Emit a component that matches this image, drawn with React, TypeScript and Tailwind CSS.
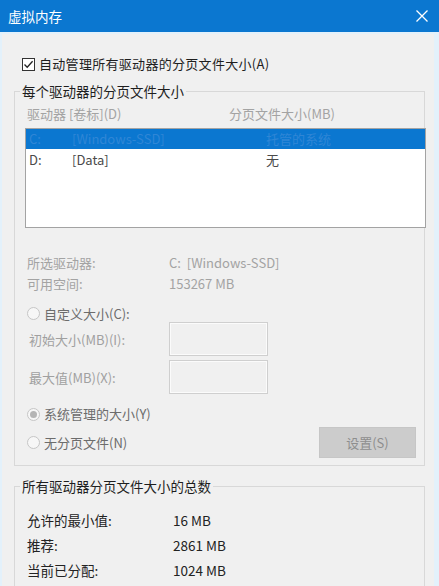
import React from 'react';

const font = { fontFamily: '"Noto Sans CJK SC", "Liberation Sans", sans-serif' };

const Radio: React.FC<{ checked?: boolean; label: string; className?: string }> = ({ checked, label, className }) => (
  <div className={`flex items-center ${className ?? ''}`}>
    <span className="ml-[7px] w-[13px] h-[13px] rounded-full border border-[#c6c6c6] bg-[#f7f7f7] flex items-center justify-center">
      {checked && <span className="w-[7px] h-[7px] rounded-full bg-[#b5b5b5]" />}
    </span>
    <span className="ml-[4px] text-[13px] leading-[18px] text-[#6c6c6c]">{label}</span>
  </div>
);

const InputRow: React.FC<{ label: string; className?: string }> = ({ label, className }) => (
  <div className={`flex items-center h-[34px] ${className ?? ''}`}>
    <span className="ml-[9px] w-[140px] pt-[2px] text-[13px] leading-[18px] text-[#a0a0a0]">{label}</span>
    <div className="w-[99px] h-[34px] border border-[#cfcfcf] bg-[#f0f0f0] shadow-[inset_0_0_0_1px_#fbfbfb]" />
  </div>
);

export default function App() {
  return (
    <div className="w-[439px] h-[586px] overflow-hidden bg-[#e3f1fb]" style={font}>
      {/* Title bar */}
      <div className="h-8 bg-[#0b77d0] flex items-center justify-between pl-2 pr-[10px]">
        <span className="text-[13.5px] leading-[18px] text-white">虚拟内存</span>
        <svg width="12" height="12" viewBox="0 0 12 12" className="mr-[1px]">
          <path d="M0.5 0.5 L11.5 11.5 M11.5 0.5 L0.5 11.5" stroke="#ffffff" strokeWidth="1.3" fill="none" />
        </svg>
      </div>

      <div className="mt-[2px] ml-[2px] mr-[5px] h-[552px] bg-[#f0f0f0] pt-[21px] overflow-hidden">
        {/* Auto manage checkbox */}
        <div className="flex items-center h-[18px] pl-[20px]">
          <span className="w-[13px] h-[13px] border border-[#333333] bg-white flex items-center justify-center">
            <svg width="11" height="11" viewBox="0 0 11 11">
              <path d="M1.5 5.5 L4.2 8.3 L9.6 2.2" stroke="#222222" strokeWidth="1.3" fill="none" />
            </svg>
          </span>
          <span className="ml-[4px] text-[13px] tracking-[0.3px] leading-[18px] text-[#1e1e1e]">自动管理所有驱动器的分页文件大小(A)</span>
        </div>

        {/* Per-drive group */}
        <fieldset className="mt-[9px] ml-[12px] w-[411px] min-w-0 border border-[#d8d8d8] pl-[5px] pr-[8px] pb-[7px]">
          <legend className="px-[2px] text-[13.5px] leading-[18px] text-[#1e1e1e]">每个驱动器的分页文件大小</legend>

          <div className="flex mt-[5px] h-[18px] text-[13px] leading-[18px] text-[#a3a3a3]">
            <span className="ml-[7px] w-[202px]">驱动器 [卷标](D)</span>
            <span>分页文件大小(MB)</span>
          </div>

          <div className="mt-[5px] ml-[5px] w-[401px] h-[100px] border border-[#a3a3a3] bg-white">
            <div className="flex h-[20px] items-center bg-[#0b77d0] text-[13px] leading-[18px] text-[#2f86d6] pl-[3px]">
              <span className="w-[43px]">C:</span>
              <span className="w-[194px]">[Windows-SSD]</span>
              <span>托管的系统</span>
            </div>
            <div className="flex h-[21px] items-center text-[13px] leading-[18px] text-[#4a4a4a] pl-[3px]">
              <span className="w-[43px]">D:</span>
              <span className="w-[194px]">[Data]</span>
              <span>无</span>
            </div>
          </div>

          <div className="mt-[24px] flex items-center h-[21px] text-[13px] leading-[18px] text-[#a3a3a3]">
            <span className="ml-[7px] w-[142px]">所选驱动器:</span>
            <span>C:&nbsp;&nbsp;[Windows-SSD]</span>
          </div>
          <div className="flex items-center h-[21px] text-[13px] leading-[18px] text-[#a3a3a3]">
            <span className="ml-[7px] w-[142px]">可用空间:</span>
            <span>153267 MB</span>
          </div>

          <Radio label="自定义大小(C):" className="mt-[11px] h-[17px]" />
          <InputRow label="初始大小(MB)(I):" />
          <InputRow label="最大值(MB)(X):" className="mt-[4px]" />

          <Radio checked label="系统管理的大小(Y)" className="mt-[11px] h-[18px]" />

          <div className="mt-[4px] h-[31px] flex items-center justify-between">
            <Radio label="无分页文件(N)" />
            <div className="w-[97px] h-[31px] bg-[#cccccc] border border-[#c6c6c6] flex items-center justify-center text-[13px] leading-[18px] text-[#8e8e8e]">
              设置(S)
            </div>
          </div>
        </fieldset>

        {/* Totals group */}
        <fieldset className="mt-[11px] ml-[12px] w-[411px] min-w-0 border border-[#d8d8d8] pl-[5px] pr-[8px] pb-[20px]">
          <legend className="px-[2px] text-[13.5px] leading-[18px] text-[#1e1e1e]">所有驱动器分页文件大小的总数</legend>
          <div className="mt-[12px] text-[13.5px] leading-[18px] text-[#222222]">
            <div className="flex items-center h-[25px]">
              <span className="ml-[7px] w-[146px]">允许的最小值:</span>
              <span>16 MB</span>
            </div>
            <div className="flex items-center h-[25px]">
              <span className="ml-[7px] w-[146px]">推荐:</span>
              <span>2861 MB</span>
            </div>
            <div className="flex items-center h-[25px]">
              <span className="ml-[7px] w-[146px]">当前已分配:</span>
              <span>1024 MB</span>
            </div>
          </div>
        </fieldset>
      </div>
    </div>
  );
}
